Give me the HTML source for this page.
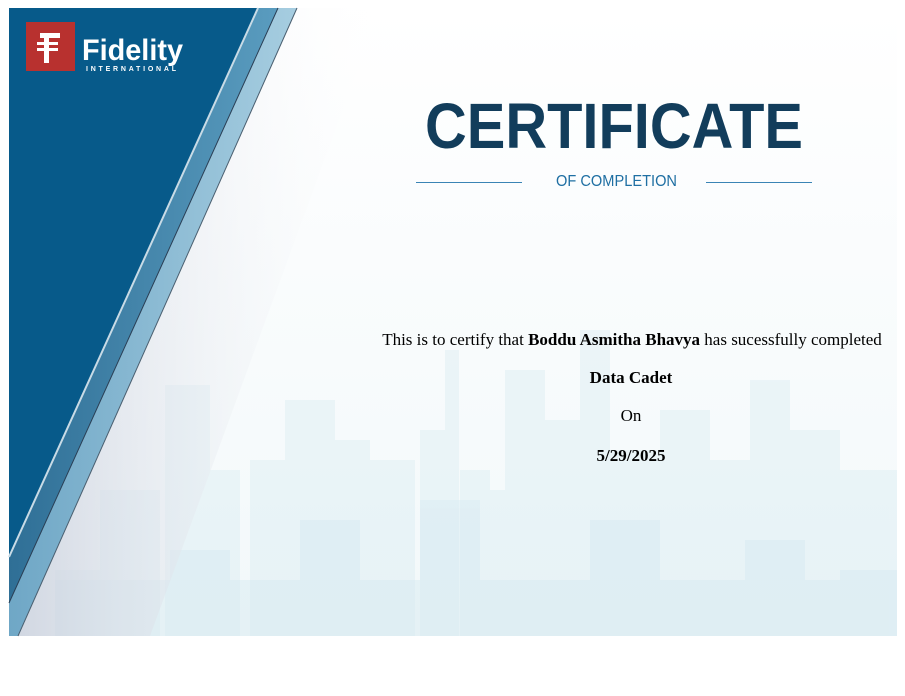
<!DOCTYPE html>
<html><head><meta charset="utf-8"><style>
html,body{margin:0;padding:0;background:#fff;width:905px;height:696px;overflow:hidden}
svg{display:block}
</style></head><body>
<svg width="905" height="696" viewBox="0 0 905 696" xmlns="http://www.w3.org/2000/svg">
<defs>
<linearGradient id="bg" x1="0" y1="0" x2="0" y2="1">
<stop offset="0" stop-color="#ffffff"/><stop offset="1" stop-color="#f2f8fa"/>
</linearGradient>
<linearGradient id="shade" x1="0" y1="0" x2="1" y2="0">
<stop offset="0" stop-color="#c9cfdc" stop-opacity=".8"/><stop offset="1" stop-color="#ffffff" stop-opacity="0"/>
</linearGradient>
<linearGradient id="mid" x1="0" y1="0" x2="1" y2="0">
<stop offset="0" stop-color="#2f6f96"/><stop offset="1" stop-color="#5a9cbf"/>
</linearGradient>
<linearGradient id="light" x1="0" y1="0" x2="1" y2="0">
<stop offset="0" stop-color="#6fa7c6"/><stop offset="1" stop-color="#a6cde0"/>
</linearGradient>
</defs>
<rect x="9" y="8" width="888" height="628" fill="url(#bg)"/>
<g fill="#d4e9f0" opacity=".35">
<rect x="55" y="570" width="45" height="66"/>
<rect x="100" y="490" width="60" height="146"/>
<rect x="165" y="385" width="45" height="251"/>
<rect x="210" y="470" width="30" height="166"/>
<rect x="250" y="460" width="60" height="176"/>
<rect x="285" y="400" width="50" height="236"/>
<rect x="330" y="440" width="40" height="196"/>
<rect x="365" y="460" width="50" height="176"/>
<rect x="420" y="430" width="35" height="206"/>
<rect x="445" y="350" width="14" height="286"/>
<rect x="460" y="470" width="30" height="166"/>
<rect x="490" y="490" width="50" height="146"/>
<rect x="505" y="370" width="40" height="266"/>
<rect x="545" y="420" width="60" height="216"/>
<rect x="580" y="330" width="30" height="306"/>
<rect x="610" y="450" width="50" height="186"/>
<rect x="660" y="410" width="50" height="226"/>
<rect x="710" y="460" width="40" height="176"/>
<rect x="750" y="380" width="40" height="256"/>
<rect x="790" y="430" width="50" height="206"/>
<rect x="840" y="470" width="57" height="166"/>
</g>
<g fill="#d6eaf1" opacity=".45">
<rect x="55" y="580" width="842" height="56"/>
<rect x="170" y="550" width="60" height="86"/>
<rect x="300" y="520" width="60" height="116"/>
<rect x="420" y="500" width="60" height="136"/>
<rect x="590" y="520" width="70" height="116"/>
<rect x="745" y="540" width="60" height="96"/>
<rect x="840" y="570" width="57" height="66"/>
</g>
<polygon points="297,8 380,8 150,636 18,636" fill="url(#shade)"/>
<polygon points="9,8 297,8 18,636 9,636" fill="url(#light)"/>
<line x1="297" y1="8" x2="18" y2="636" stroke="#4a5f70" stroke-width="1"/>
<polygon points="9,8 278,8 9,603" fill="url(#mid)"/>
<line x1="278" y1="8" x2="9" y2="603" stroke="#2a3f55" stroke-width="1"/>
<polygon points="9,8 258,8 9,557" fill="#075a8a"/>
<line x1="258" y1="8" x2="9" y2="557" stroke="#c8dbe6" stroke-width="2"/>
<rect x="26" y="22" width="49" height="49" fill="#b8312f"/>
<g fill="#fff">
<rect x="44" y="33" width="5" height="30"/>
<rect x="40" y="33" width="20" height="5"/>
<rect x="37" y="42" width="21" height="3"/>
<rect x="37" y="48" width="21" height="3"/>
</g>
<text x="82" y="60" font-family="Liberation Sans, sans-serif" font-weight="bold" font-size="30" fill="#fff" textLength="101" lengthAdjust="spacingAndGlyphs">Fidelity</text>
<text x="86" y="71" font-family="Liberation Sans, sans-serif" font-weight="bold" font-size="7" fill="#fff" textLength="90" lengthAdjust="spacing">INTERNATIONAL</text>
<text x="425" y="148" font-family="Liberation Sans, sans-serif" font-weight="bold" font-size="64" fill="#123d5b" textLength="378" lengthAdjust="spacingAndGlyphs">CERTIFICATE</text>
<text x="556" y="186" font-family="Liberation Sans, sans-serif" font-size="15.5" fill="#1f6fa3" textLength="121" lengthAdjust="spacingAndGlyphs">OF COMPLETION</text>
<line x1="416" y1="182.5" x2="522" y2="182.5" stroke="#3a84b5" stroke-width="1"/>
<line x1="706" y1="182.5" x2="812" y2="182.5" stroke="#3a84b5" stroke-width="1"/>
<g font-family="Liberation Serif, serif" font-size="17" fill="#000" text-anchor="middle">
<text x="632" y="345">This is to certify that <tspan font-weight="bold">Boddu Asmitha Bhavya</tspan> has sucessfully completed</text>
<text x="631" y="383" font-weight="bold">Data Cadet</text>
<text x="631" y="421">On</text>
<text x="631" y="461" font-weight="bold">5/29/2025</text>
</g>
</svg>
</body></html>
